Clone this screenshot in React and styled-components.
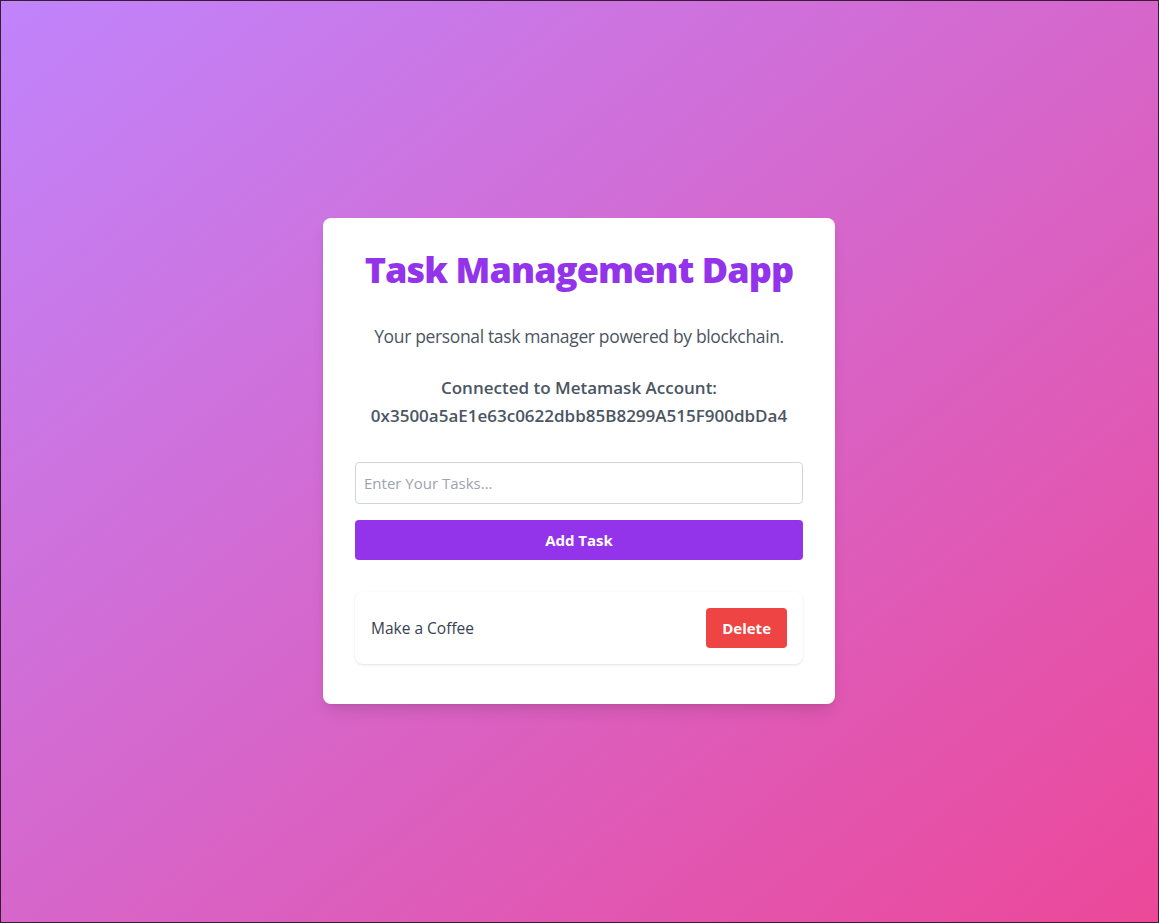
import React, { useState } from 'react';
import styled, { createGlobalStyle } from 'styled-components';

const GlobalStyle = createGlobalStyle`
    * {
        box-sizing: border-box;
    }
    html, body {
        margin: 0;
        padding: 0;
        height: 100%;
    }
    body {
        font-family: "Open Sans", "Noto Sans", "Liberation Sans", sans-serif;
    }
`;

const Page = styled.div`
    min-height: 923px;
    display: flex;
    align-items: center;
    justify-content: center;
    padding: 0 1px 1px 0;
    background: linear-gradient(to bottom right, #c084fc, #ec4899);
    box-shadow: inset 0 0 0 1px #3b1a33;
`;

const Card = styled.div`
    width: 512px;
    padding: 32px;
    background: #fff;
    border-radius: 8px;
    box-shadow: 0 10px 15px -3px rgba(0, 0, 0, 0.1), 0 4px 6px -4px rgba(0, 0, 0, 0.1);
`;

const Title = styled.h1`
    margin: 0 0 32px;
    font-size: 36px;
    line-height: 40px;
    font-weight: 800;
    color: #9333ea;
    text-align: center;
    letter-spacing: -0.9px;
`;

const Subtitle = styled.p`
    margin: 0 0 24px;
    font-size: 17.5px;
    line-height: 28px;
    color: #4b5563;
    text-align: center;
    letter-spacing: -0.35px;
`;

const Account = styled.p`
    margin: 0 0 32px;
    font-size: 17px;
    line-height: 28px;
    font-weight: 600;
    color: #4b5563;
    text-align: center;
`;

const Input = styled.input`
    display: block;
    width: 100%;
    height: 42px;
    margin: 0 0 16px;
    padding: 8px;
    font-family: inherit;
    font-size: 15px;
    line-height: 24px;
    color: #374151;
    border: 1px solid #d1d5db;
    border-radius: 4px;
    outline: none;

    &::placeholder {
        color: #9ca3af;
    }
`;

const Button = styled.button`
    display: block;
    height: 40px;
    padding: 8px 16px;
    font-family: inherit;
    font-size: 15px;
    line-height: 24px;
    font-weight: 700;
    color: #fff;
    border: none;
    border-radius: 4px;
    cursor: pointer;
    background: ${(p) => (p.$danger ? '#ef4444' : '#9333ea')};
    width: ${(p) => (p.$full ? '100%' : 'auto')};
`;

const TaskList = styled.ul`
    list-style: none;
    margin: 32px 0 0;
    padding: 0;
`;

const TaskItem = styled.li`
    display: flex;
    align-items: center;
    justify-content: space-between;
    margin: 0 0 8px;
    padding: 16px;
    background: #fff;
    border-radius: 8px;
    box-shadow: 0 1px 3px 0 rgba(0, 0, 0, 0.1), 0 1px 2px -1px rgba(0, 0, 0, 0.06);
`;

const TaskText = styled.span`
    font-size: 15.5px;
    color: #374151;
`;

function App() {
    const [tasks, setTasks] = useState(['Make a Coffee']);
    const [text, setText] = useState('');

    const addTask = () => {
        if (!text.trim()) return;
        setTasks([...tasks, text.trim()]);
        setText('');
    };

    return (
        <Page>
            <GlobalStyle />
            <Card>
                <Title>Task Management Dapp</Title>
                <Subtitle>Your personal task manager powered by blockchain.</Subtitle>
                <Account>
                    Connected to Metamask Account:
                    <br />
                    0x3500a5aE1e63c0622dbb85B8299A515F900dbDa4
                </Account>
                <Input
                    type="text"
                    placeholder="Enter Your Tasks..."
                    value={text}
                    onChange={(e) => setText(e.target.value)}
                />
                <Button $full onClick={addTask}>Add Task</Button>
                <TaskList>
                    {tasks.map((task, i) => (
                        <TaskItem key={i}>
                            <TaskText>{task}</TaskText>
                            <Button $danger onClick={() => setTasks(tasks.filter((_, j) => j !== i))}>
                                Delete
                            </Button>
                        </TaskItem>
                    ))}
                </TaskList>
            </Card>
        </Page>
    );
}

export default App;
